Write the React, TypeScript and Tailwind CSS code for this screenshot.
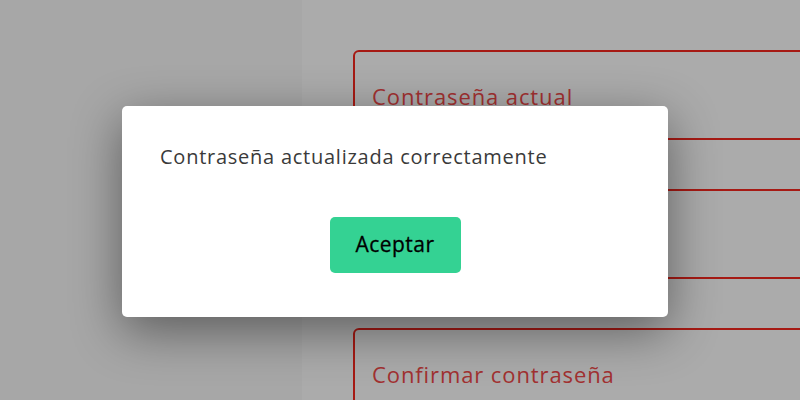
import React from 'react';

const fields = ['Contraseña actual', '', 'Confirmar contraseña'];

export default function App() {
  return (
    <div className="relative h-[400px] w-[800px] overflow-hidden bg-white font-['Open_Sans',sans-serif]">
      <div className="flex h-full">
        <aside className="w-[302px] shrink-0 bg-[#f9f9f9]" />
        <main className="flex-1 pl-[51px] pt-[50px]">
          <div className="flex flex-col gap-[49px]">
            {fields.map((label, i) => (
              <div
                key={i}
                className="-mr-[20px] flex h-[90px] items-center rounded-[6px] border-2 border-[#f8281e] pl-[17px]"
              >
                {label && (
                  <span className="pt-[2px] text-[22px] tracking-[0.9px] text-[#f24a4a]">{label}</span>
                )}
              </div>
            ))}
          </div>
        </main>
      </div>

      <div className="absolute inset-0 bg-black/[0.33]">
        <div className="ml-[122px] mt-[106px] flex h-[211px] w-[546px] flex-col rounded-[5px] bg-white px-[38px] pt-[36px] shadow-[0_14px_50px_rgba(0,0,0,0.45)]">
          <p className="text-[20px] tracking-[0.75px] text-[#3a3a3a]">Contraseña actualizada correctamente</p>
          <div className="mt-[45px] flex justify-center">
            <button
              type="button"
              className="flex h-[56px] w-[131px] items-center justify-center rounded-[5px] bg-[#34d293] text-[21px] tracking-[0.5px] text-black [-webkit-text-stroke:0.3px_black]"
            >
              Aceptar
            </button>
          </div>
        </div>
      </div>
    </div>
  );
}
